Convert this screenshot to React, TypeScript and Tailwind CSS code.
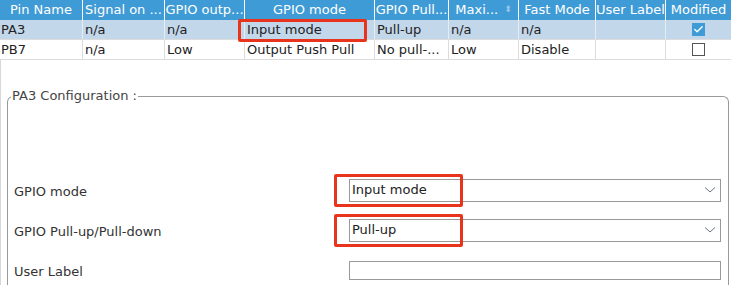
import { Check } from 'lucide-react';

const COLS = [
  { title: 'Pin Name', w: 83 },
  { title: 'Signal on ...', w: 82 },
  { title: 'GPIO outp...', w: 80 },
  { title: 'GPIO mode', w: 130 },
  { title: 'GPIO Pull...', w: 74 },
  { title: 'Maxi...', w: 70, sort: true },
  { title: 'Fast Mode', w: 77 },
  { title: 'User Label', w: 70 },
  { title: 'Modified', w: 65 },
];

const ROWS = [
  { cells: ['PA3', 'n/a', 'n/a', 'Input mode', 'Pull-up', 'n/a', 'n/a', ''], modified: true },
  { cells: ['PB7', 'n/a', 'Low', 'Output Push Pull', 'No pull-...', 'Low', 'Disable', ''], modified: false },
];

function Chevron() {
  return (
    <svg width="12" height="8" viewBox="0 0 12 8" className="text-gray-500">
      <path d="M1 1.5 L6 6 L11 1.5" fill="none" stroke="currentColor" strokeWidth="1" />
    </svg>
  );
}

function Field({ label, value, select, highlight }: { label: string; value: string; select?: boolean; highlight?: boolean }) {
  return (
    <div className="flex items-center h-[40px]">
      <div className="w-[341px] pl-[6px] pt-[4px] text-[13px] text-[#333]">{label}</div>
      <div className="relative flex-1 mr-[7px]">
        <div className={`flex items-center justify-between border border-[#999] bg-white px-[2px] ${select ? 'h-[23px]' : 'h-[19px]'}`}>
          <span className="text-[13px] text-[#222]">{value}</span>
          {select && <span className="mr-[2px]"><Chevron /></span>}
        </div>
        {highlight && (
          <div className="absolute left-[-15px] top-[-5px] w-[129px] h-[33px] border-[3px] border-[#e8341c] rounded-[2px]" />
        )}
      </div>
    </div>
  );
}

export default function App() {
  return (
    <div className="w-[731px] h-[285px] bg-white overflow-hidden" style={{ fontFamily: '"DejaVu Sans", "Noto Sans", sans-serif' }}>
      {/* Pin table */}
      <div className="relative">
        <div className="flex h-[20px] bg-[#3f9bd6] text-white text-[13px]">
          {COLS.map((c, i) => (
            <div
              key={c.title}
              style={{ width: c.w }}
              className={`flex items-center justify-center shrink-0 whitespace-nowrap overflow-hidden ${i < COLS.length - 1 ? 'border-r border-white' : ''}`}
            >
              {c.title}
              {c.sort && <span className="ml-[6px] text-[9px] text-[#9cc8e8]">⬍</span>}
            </div>
          ))}
        </div>
        {ROWS.map((r, ri) => (
          <div key={ri} className={`flex h-[20px] text-[13px] text-[#222] border-b border-[#dcdcdc] ${ri === 0 ? 'bg-[#c3d7ea]' : 'bg-white'}`}>
            {r.cells.map((cell, ci) => (
              <div
                key={ci}
                style={{ width: COLS[ci].w }}
                className={`flex items-center shrink-0 whitespace-nowrap overflow-hidden border-r ${ri === 0 ? 'border-[#e4ecf4]' : 'border-[#dcdcdc]'} ${ci === 0 ? 'pl-[1px]' : 'pl-[2px]'}`}
              >
                {cell}
              </div>
            ))}
            <div style={{ width: COLS[8].w }} className="flex items-center justify-center shrink-0">
              {r.modified ? (
                <div className="w-[13px] h-[13px] bg-[#3f9bd6] flex items-center justify-center">
                  <Check size={11} strokeWidth={3} className="text-white" />
                </div>
              ) : (
                <div className="w-[13px] h-[13px] border border-[#555] bg-white" />
              )}
            </div>
          </div>
        ))}
        <div className="absolute left-[238px] top-[19px] w-[129px] h-[23px] border-[3px] border-[#e8341c] rounded-[2px]" />
      </div>

      {/* Configuration group */}
      <div className="border-l border-[#d8d8d8] h-[225px] pt-[36px]">
        <div className="ml-[6px] mr-[2px] relative border-l border-r border-t border-[#9a9a9a] rounded-t-[6px] h-[200px]">
          <div className="absolute left-[3px] top-[-9px] bg-white px-[1px] text-[13px] text-[#444] leading-[16px]">PA3 Configuration :</div>
          <div className="pt-[73px]">
            <Field label="GPIO mode" value="Input mode" select highlight />
            <Field label="GPIO Pull-up/Pull-down" value="Pull-up" select highlight />
            <Field label="User Label" value="" />
          </div>
        </div>
      </div>
    </div>
  );
}
